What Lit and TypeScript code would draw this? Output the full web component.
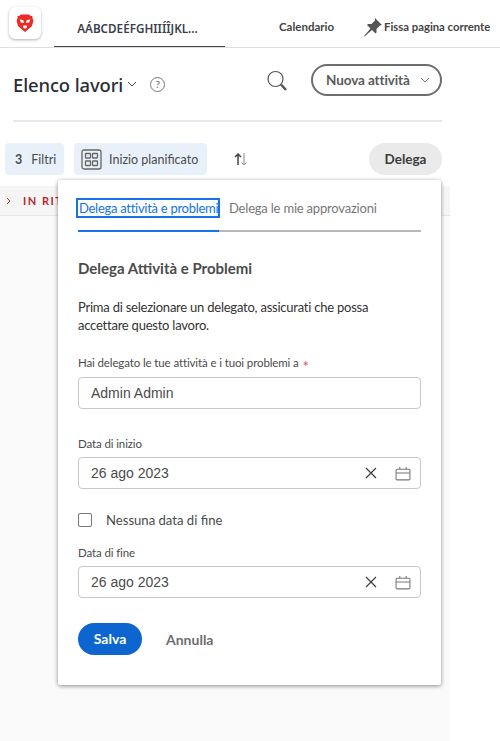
import { LitElement, html, css, svg } from "lit";
import { customElement } from "lit/decorators.js";

const chevron = (w: number) => html`<svg width=${w} height=${w} viewBox="0 0 10 10" fill="none" stroke="currentColor" stroke-width="1"><path d="M1 3l4 4 4-4" /></svg>`;

const calendar = svg`<rect x="1" y="3" width="13" height="10" rx="1"/><path d="M1 6.5h13M4.5 1v2M10.5 1v2"/>`;

@customElement("app-root")
export class AppRoot extends LitElement {
  static override styles = css`
    :host {
      display: block;
      position: relative;
      width: 500px;
      height: 741px;
      overflow: hidden;
      background: #fff;
      font-family: "Lato", "Noto Sans", sans-serif;
      color: #2c2c2c;
    }
    .top {
      display: flex;
      align-items: flex-start;
      height: 47px;
      border-bottom: 1px solid #dedede;
    }
    .logo {
      width: 32px;
      height: 32px;
      margin: 7px 13px 0 9px;
      border-radius: 6px;
      background: #fff;
      box-shadow: 0 1px 3px rgba(0, 0, 0, 0.3);
      display: flex;
      align-items: center;
      justify-content: center;
    }
    .tab {
      width: 171px;
      height: 47px;
      box-sizing: border-box;
      border-bottom: 1px solid #444;
      padding: 19px 4px 0 0;
      text-align: center;
      font-family: "Noto Sans", sans-serif;
      font-size: 11.7px;
      font-weight: 600;
      line-height: 18px;
      color: #3a3f4a;
      white-space: nowrap;
    }
    .cal {
      margin-left: 54px;
      padding-top: 18px;
      font-size: 11.5px;
      font-weight: 700;
      line-height: 18px;
      color: #444;
    }
    .pin {
      display: flex;
      align-items: center;
      gap: 1px;
      margin-left: 29px;
      padding-top: 17px;
      font-size: 11.3px;
      font-weight: 700;
      line-height: 18px;
      color: #444;
      white-space: nowrap;
    }
    .head {
      display: flex;
      align-items: center;
      height: 72px;
      margin: 0 58px 0 13px;
      border-bottom: 2px solid #e8e8e8;
    }
    .title {
      font-family: "Noto Sans", sans-serif;
      font-size: 18.4px;
      font-weight: 500;
      color: #2a2d35;
      letter-spacing: -0.1px;
    }
    .title-chev {
      display: flex;
      margin-left: 4px;
      color: #444;
    }
    .help {
      width: 13px;
      height: 13px;
      margin-left: 13px;
      border: 1px solid #777;
      border-radius: 50%;
      font-size: 10px;
      line-height: 13px;
      text-align: center;
      color: #666;
    }
    .search {
      display: flex;
      margin-left: auto;
      margin-right: 23px;
      margin-bottom: 6px;
    }
    .new {
      display: flex;
      align-items: center;
      gap: 10px;
      width: 131px;
      height: 32px;
      box-sizing: border-box;
      padding-left: 13px;
      margin-bottom: 9px;
      border: 2px solid #6e6e6e;
      border-radius: 16px;
      font-size: 13.5px;
      font-weight: 700;
      letter-spacing: -0.1px;
      color: #5a5a5a;
    }
    .new-chev {
      display: flex;
      color: #777;
    }
    .tools {
      display: flex;
      align-items: center;
      height: 32px;
      margin: 21px 58px 0 5px;
    }
    .chip {
      display: flex;
      align-items: center;
      height: 32px;
      box-sizing: border-box;
      background: #e8f1fa;
      border-radius: 4px;
      font-size: 12.5px;
      color: #4b4b4b;
    }
    .filters {
      width: 59px;
      padding-left: 10px;
      gap: 9px;
      margin-right: 10px;
    }
    .filters b {
      font-weight: 700;
    }
    .plan {
      width: 133px;
      padding-left: 7px;
      gap: 7px;
    }
    .sort {
      display: flex;
      margin-left: 27px;
    }
    .delega {
      margin-left: auto;
      width: 73px;
      height: 32px;
      border-radius: 16px;
      background: #eaeaea;
      font-size: 13.5px;
      font-weight: 700;
      line-height: 32px;
      text-align: center;
      color: #3c3c3c;
    }
    .content {
      width: 450px;
      height: 555px;
      margin-top: 11px;
      background: #fafafa;
    }
    .late {
      display: flex;
      align-items: center;
      gap: 11px;
      height: 30px;
      padding-left: 6px;
      box-sizing: border-box;
      background: #f5f5f5;
      border-bottom: 1px solid #e6e6e6;
      color: #b3282d;
      font-size: 11px;
      font-weight: 700;
      letter-spacing: 1.5px;
    }
    .pop {
      position: absolute;
      left: 58px;
      top: 180px;
      width: 383px;
      height: 505px;
      box-sizing: border-box;
      padding: 18px 20px 0;
      background: #fff;
      border-radius: 2px;
      box-shadow: 0 1px 4px rgba(0, 0, 0, 0.45);
    }
    .tabs {
      display: flex;
      height: 32px;
      border-bottom: 2px solid #b8b8b8;
      font-size: 13px;
      letter-spacing: -0.2px;
      line-height: 20px;
      color: #777;
      white-space: nowrap;
    }
    .tab-on {
      width: 141px;
      height: 32px;
      border-bottom: 2px solid #1473e6;
      color: #1473e6;
    }
    .tab-on span {
      display: block;
      width: 144px;
      height: 20px;
      box-sizing: border-box;
      margin-left: -2px;
      padding-left: 1px;
      border: 2px solid #1473e6;
      letter-spacing: -0.28px;
      line-height: 16px;
    }
    .tab-off {
      margin-left: 10px;
    }
    h2 {
      margin: 26px 0 0;
      font-size: 15px;
      font-weight: 700;
      line-height: 20px;
      color: #4b4b4b;
    }
    p {
      margin: 20px 0 0;
      font-size: 13px;
      letter-spacing: -0.23px;
      line-height: 18px;
      color: #333;
    }
    label {
      display: block;
      font-size: 11.5px;
      letter-spacing: -0.12px;
      line-height: 16px;
      color: #4b4b4b;
    }
    .req {
      display: inline-block;
      vertical-align: -5px;
      color: #e34850;
      font-size: 15px;
      line-height: 0;
      margin-left: 1px;
    }
    .who {
      margin-top: 21px;
    }
    .field {
      display: flex;
      align-items: center;
      height: 32px;
      margin-top: 6px;
      padding: 0 12px;
      box-sizing: border-box;
      border: 1px solid #c8c8c8;
      border-radius: 4px;
      font-family: "Liberation Sans", sans-serif;
      font-size: 14px;
      color: #4b4b4b;
    }
    .field .x {
      display: flex;
      margin-left: auto;
      margin-right: 18px;
    }
    .field .c {
      display: flex;
      margin-right: -3px;
    }
    .start {
      margin-top: 27px;
    }
    .date {
      margin-top: 5px;
    }
    .check {
      display: flex;
      align-items: center;
      gap: 14px;
      margin-top: 22px;
      font-size: 13.1px;
      line-height: 18px;
      color: #4b4b4b;
    }
    .box {
      width: 12px;
      height: 12px;
      border: 1.5px solid #777;
      border-radius: 2px;
    }
    .end {
      margin-top: 16px;
    }
    .acts {
      display: flex;
      align-items: center;
      margin-top: 25px;
      font-size: 14px;
      font-weight: 700;
    }
    .save {
      width: 64px;
      height: 32px;
      border-radius: 16px;
      background: #0d66d0;
      color: #fff;
      line-height: 32px;
      text-align: center;
    }
    .cancel {
      margin-left: 24px;
      color: #6e6e6e;
    }
  `;

  private dateField() {
    return html`<div class="field date">
      26 ago 2023
      <span class="x"><svg width="12" height="12" viewBox="0 0 12 12" stroke="#3c3c3c" stroke-width="1.2"><path d="M1 1l10 10M11 1L1 11" /></svg></span>
      <span class="c"><svg width="16" height="15" viewBox="0 0 15 14" fill="none" stroke="#777">${calendar}</svg></span>
    </div>`;
  }

  override render() {
    return html`
      <div class="top">
        <div class="logo">
          <svg width="18" height="19" viewBox="0 0 16 18">
            <path fill="#ee2a24" d="M4 0.5h8l1.5 1.5 1.5 0 0 1.5 1 3-1.5 5-4 3.5-2.500 2-2.500-2-4-3.500-1.500-5 1-3 0-1.500 1.500 0z" />
            <path fill="#fff" d="M3 5l3.500 1 .5 2.500-3-.5zM13 5l-3.500 1-.5 2.500 3-.5zM6.500 11h3l.5 1.500-2 1.500-2-1.500z" />
          </svg>
        </div>
        <div class="tab">AÁBCDEÉFGHIIÍÎJKL...</div>
        <div class="cal">Calendario</div>
        <div class="pin">
          <svg width="20" height="20" viewBox="0 0 20 20">
            <path fill="#555" d="M12 1l7 7-2 .5-3.500 3.500 0 3.500-1 1-3.500-3.500-7.500 6.500-.5-.5 6.500-7.500-3.500-3.500 1-1 3.500 0 3.500-3.500z" />
          </svg>
          Fissa pagina corrente
        </div>
      </div>

      <div class="head">
        <div class="title">Elenco lavori</div>
        <span class="title-chev">${chevron(10)}</span>
        <span class="help">?</span>
        <span class="search">
          <svg width="22" height="24" viewBox="0 0 22 24" fill="none" stroke="#555">
            <circle cx="9.5" cy="10" r="7.5" stroke-width="1.2" />
            <path d="M15 15.5l5 5.5" stroke-width="2.5" />
          </svg>
        </span>
        <div class="new">Nuova attività <span class="new-chev">${chevron(10)}</span></div>
      </div>

      <div class="tools">
        <div class="chip filters"><b>3</b> Filtri</div>
        <div class="chip plan">
          <svg width="21" height="21" viewBox="0 0 21 21" fill="none" stroke="#666" stroke-width="1.3">
            <rect x="1" y="1" width="19" height="19" rx="2" />
            <rect x="4.5" y="4.5" width="5" height="4.5" rx=".5" />
            <rect x="11.5" y="4.5" width="5" height="4.5" rx=".5" />
            <rect x="4.5" y="12" width="5" height="4.5" rx=".5" />
            <rect x="11.5" y="12" width="5" height="4.5" rx=".5" />
          </svg>
          Inizio planificato
        </div>
        <span class="sort">
          <svg width="14" height="14" viewBox="0 0 14 14" fill="none">
            <path d="M4 13V2M1 5l3-3 3 3" stroke="#444" stroke-width="1.5" />
            <path d="M10 1v12M7.5 10.5l2.5 2.5 2.5-2.5" stroke="#888" />
          </svg>
        </span>
        <div class="delega">Delega</div>
      </div>

      <div class="content">
        <div class="late">
          <svg width="6" height="8" viewBox="0 0 6 8" fill="none" stroke="#b3282d"><path d="M1 1l3 3-3 3" /></svg>
          IN RITARDO
        </div>
      </div>

      <div class="pop">
        <div class="tabs">
          <div class="tab-on"><span>Delega attività e problemi</span></div>
          <div class="tab-off">Delega le mie approvazioni</div>
        </div>
        <h2>Delega Attività e Problemi</h2>
        <p>Prima di selezionare un delegato, assicurati che possa accettare questo lavoro.</p>
        <label class="who">Hai delegato le tue attività e i tuoi problemi a <span class="req">*</span></label>
        <div class="field">Admin Admin</div>
        <label class="start">Data di inizio</label>
        ${this.dateField()}
        <div class="check"><span class="box"></span>Nessuna data di fine</div>
        <label class="end">Data di fine</label>
        ${this.dateField()}
        <div class="acts">
          <div class="save">Salva</div>
          <div class="cancel">Annulla</div>
        </div>
      </div>
    `;
  }
}
